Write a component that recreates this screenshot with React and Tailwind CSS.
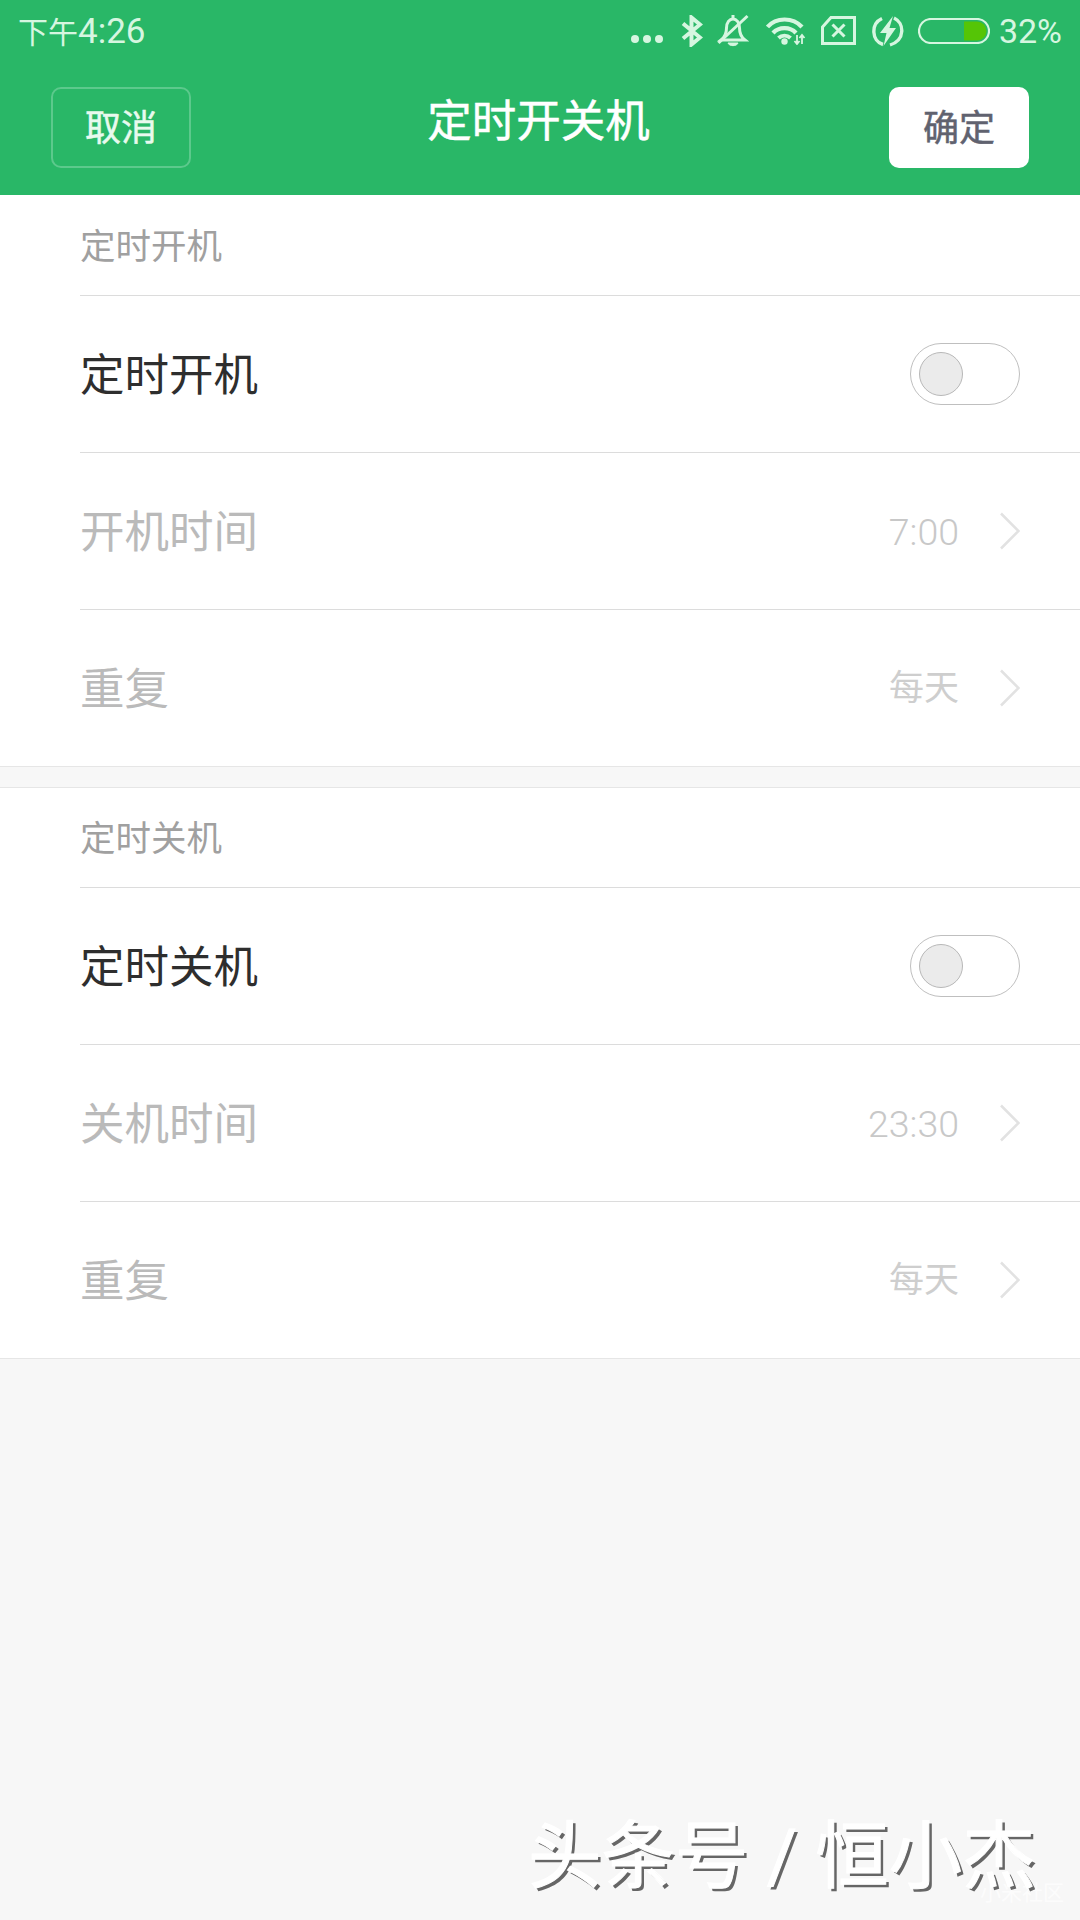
const statusIcon = "#d6f6e0";

function StatusIcons() {
  return (
    <div className="flex items-center">
      {/* three dots */}
      <svg width="32" height="10" viewBox="0 0 32 10" className="mt-[17px]">
        <circle cx="4" cy="5" r="4" fill={statusIcon} />
        <circle cx="16" cy="5" r="4" fill={statusIcon} />
        <circle cx="28" cy="5" r="4" fill={statusIcon} />
      </svg>
      {/* bluetooth */}
      <svg width="22" height="32" viewBox="0 0 22 32" className="ml-[18px]" fill="none" stroke={statusIcon} strokeWidth="4">
        <path d="M2 8.500 L19 22.500 L10.500 29.500 V2.500 L19 9.500 L2 23.500" />
      </svg>
      {/* muted bell */}
      <svg width="32" height="33" viewBox="0 0 32 33" className="ml-[14px]" fill="none" stroke={statusIcon} strokeWidth="3">
        <path d="M4 26 C8 23 9.500 19 9.500 14 C9.500 8.500 12.500 5 16 5 C19.500 5 22.500 8.500 22.500 14 C22.500 19 24 23 28 26 Z" />
        <path d="M16 1 V5" />
        <path d="M11 29 H21 C20 32.500 12 32.500 11 29 Z" fill={statusIcon} strokeWidth="1" />
        <path d="M30.500 2 L1.500 29" />
      </svg>
      {/* wifi */}
      <svg width="40" height="28" viewBox="0 0 40 28" className="ml-[17px]" fill="none" stroke={statusIcon} strokeWidth="4.200">
        <path d="M1.500 10 C10 0 27 0 36 10" />
        <path d="M7 16 C13 9.500 24 9.500 30 16" />
        <path d="M12.500 21 C16 18 21 18 24.500 21" />
        <circle cx="18.500" cy="24.500" r="3.200" fill={statusIcon} stroke="none" />
        <path d="M31 18 V27 M28.500 24 L31 27 L33.500 24 M36 27 V18 M33.500 21 L36 18 L38.500 21" strokeWidth="1.800" />
      </svg>
      {/* sim card with x */}
      <svg width="35" height="29" viewBox="0 0 35 29" className="ml-[15px]" fill="none" stroke={statusIcon} strokeWidth="3">
        <path d="M1.500 11 L10 1.500 H33.500 V27.500 H1.500 Z" />
        <path d="M11.500 8.500 L23.500 20.500 M23.500 8.500 L11.500 20.500" strokeWidth="3" />
      </svg>
      {/* charging circle */}
      <svg width="32" height="32" viewBox="0 0 32 32" className="ml-[16px]" fill="none" stroke={statusIcon} strokeWidth="3.400">
        <path d="M10 3.500 C-1.500 9 -0.500 26 11 29.500 M22 3 C32.500 8 33.500 25 18 30" />
        <path d="M21 1 L8 18 H14.500 L11.500 31 L24 13 H17.500 Z" fill={statusIcon} stroke="none" />
      </svg>
      {/* battery */}
      <svg width="72" height="26" viewBox="0 0 72 26" className="ml-[14px]" fill="none">
        <rect x="1" y="1" width="70" height="24" rx="12" stroke={statusIcon} strokeWidth="2.200" />
        <path d="M46 3.500 H59 A9.500 9.500 0 0 1 59 22.500 H46 Z" fill="#55c506" />
      </svg>
      <span className="ml-[9px] text-[34px] text-[#d6f6e0] leading-none">32%</span>
    </div>
  );
}

function Toggle() {
  return (
    <div className="w-[110px] h-[62px] rounded-full border border-[#bfbfbf] bg-white flex items-center pl-2">
      <div className="w-[44px] h-[44px] rounded-full bg-[#ebebeb] border border-[#b8b8b8]"></div>
    </div>
  );
}

function Chevron() {
  return (
    <svg width="20" height="38" viewBox="0 0 20 38" fill="none" stroke="#e2e2e2" strokeWidth="2.500">
      <path d="M1 1.500 L18.500 19 L1 36.500" />
    </svg>
  );
}

function SectionLabel({ title, heightClass }) {
  return (
    <div className={`${heightClass} pl-[80px] pt-[5px] flex items-center text-[35.500px] text-[#a0a0a0]`}>
      {title}
    </div>
  );
}

function ToggleRow({ title }) {
  return (
    <div className="ml-[80px] h-[157px] border-t border-[#dcdcdc] flex items-center justify-between pr-[60px]">
      <span className="text-[44.500px] text-[#2e2e2e] pt-[4px]">{title}</span>
      <Toggle />
    </div>
  );
}

function ValueRow({ title, value, valueClass }) {
  return (
    <div className="ml-[80px] h-[157px] border-t border-[#dcdcdc] flex items-center justify-between pr-[60px]">
      <span className="text-[44.500px] text-[#bababa] pt-[4px]">{title}</span>
      <div className="flex items-center gap-[41px]">
        <span className={`${valueClass} pt-[2px]`}>{value}</span>
        <Chevron />
      </div>
    </div>
  );
}

const digitValue = "text-[37.500px] text-[#c8c8c8] font-light";
const wordValue = "text-[35px] text-[#cecece]";

export default function App() {
  return (
    <div className="w-[1080px] h-[1920px] bg-[#f7f7f7] overflow-hidden relative font-['Roboto','Noto_Sans_CJK_SC',sans-serif]">
      {/* header */}
      <div className="h-[195px] bg-[#29b767]">
        <div className="h-[60px] flex items-center justify-between pl-[18px] pr-[18px] pt-[1px]">
          <span className="text-[#d6f6e0] leading-none pt-[2px]">
            <span className="text-[30px]">下午</span>
            <span className="text-[35px]">4:26</span>
          </span>
          <StatusIcons />
        </div>
        <div className="flex items-center justify-between px-[51px] pt-[27px]">
          <button className="w-[140px] h-[81px] rounded-[10px] border-2 border-[#5cc98c] text-[36px] text-[#e8faee] pt-[3px] [-webkit-text-stroke:0.5px_#e8faee]">
            取消
          </button>
          <h1 className="text-[44.500px] text-white pb-[11px] pr-[3px] [-webkit-text-stroke:0.5px_#ffffff]">定时开关机</h1>
          <button className="w-[140px] h-[81px] rounded-[10px] bg-white text-[36px] text-[#60626f] pt-[3px] [-webkit-text-stroke:0.5px_#60626f]">
            确定
          </button>
        </div>
      </div>

      {/* timed power on */}
      <div className="bg-white border-b border-[#e6e6e6]">
        <SectionLabel title="定时开机" heightClass="h-[100px]" />
        <ToggleRow title="定时开机" />
        <ValueRow title="开机时间" value="7:00" valueClass={digitValue} />
        <ValueRow title="重复" value="每天" valueClass={wordValue} />
      </div>

      {/* timed power off */}
      <div className="mt-[20px] bg-white border-y border-[#e6e6e6]">
        <SectionLabel title="定时关机" heightClass="h-[99px]" />
        <ToggleRow title="定时关机" />
        <ValueRow title="关机时间" value="23:30" valueClass={digitValue} />
        <ValueRow title="重复" value="每天" valueClass={wordValue} />
      </div>

      {/* watermarks */}
      <div className="absolute left-[980px] top-[1878px] text-[21px] leading-[30px] text-white/70 whitespace-nowrap">
        小米社区
      </div>
      <div className="absolute left-[528px] top-[1807px] text-[73.500px] leading-[100px] text-white whitespace-nowrap [-webkit-text-stroke:1px_#ffffff] [text-shadow:3px_3px_0_#666]">
        头条号 / 恒小杰
      </div>
    </div>
  );
}
